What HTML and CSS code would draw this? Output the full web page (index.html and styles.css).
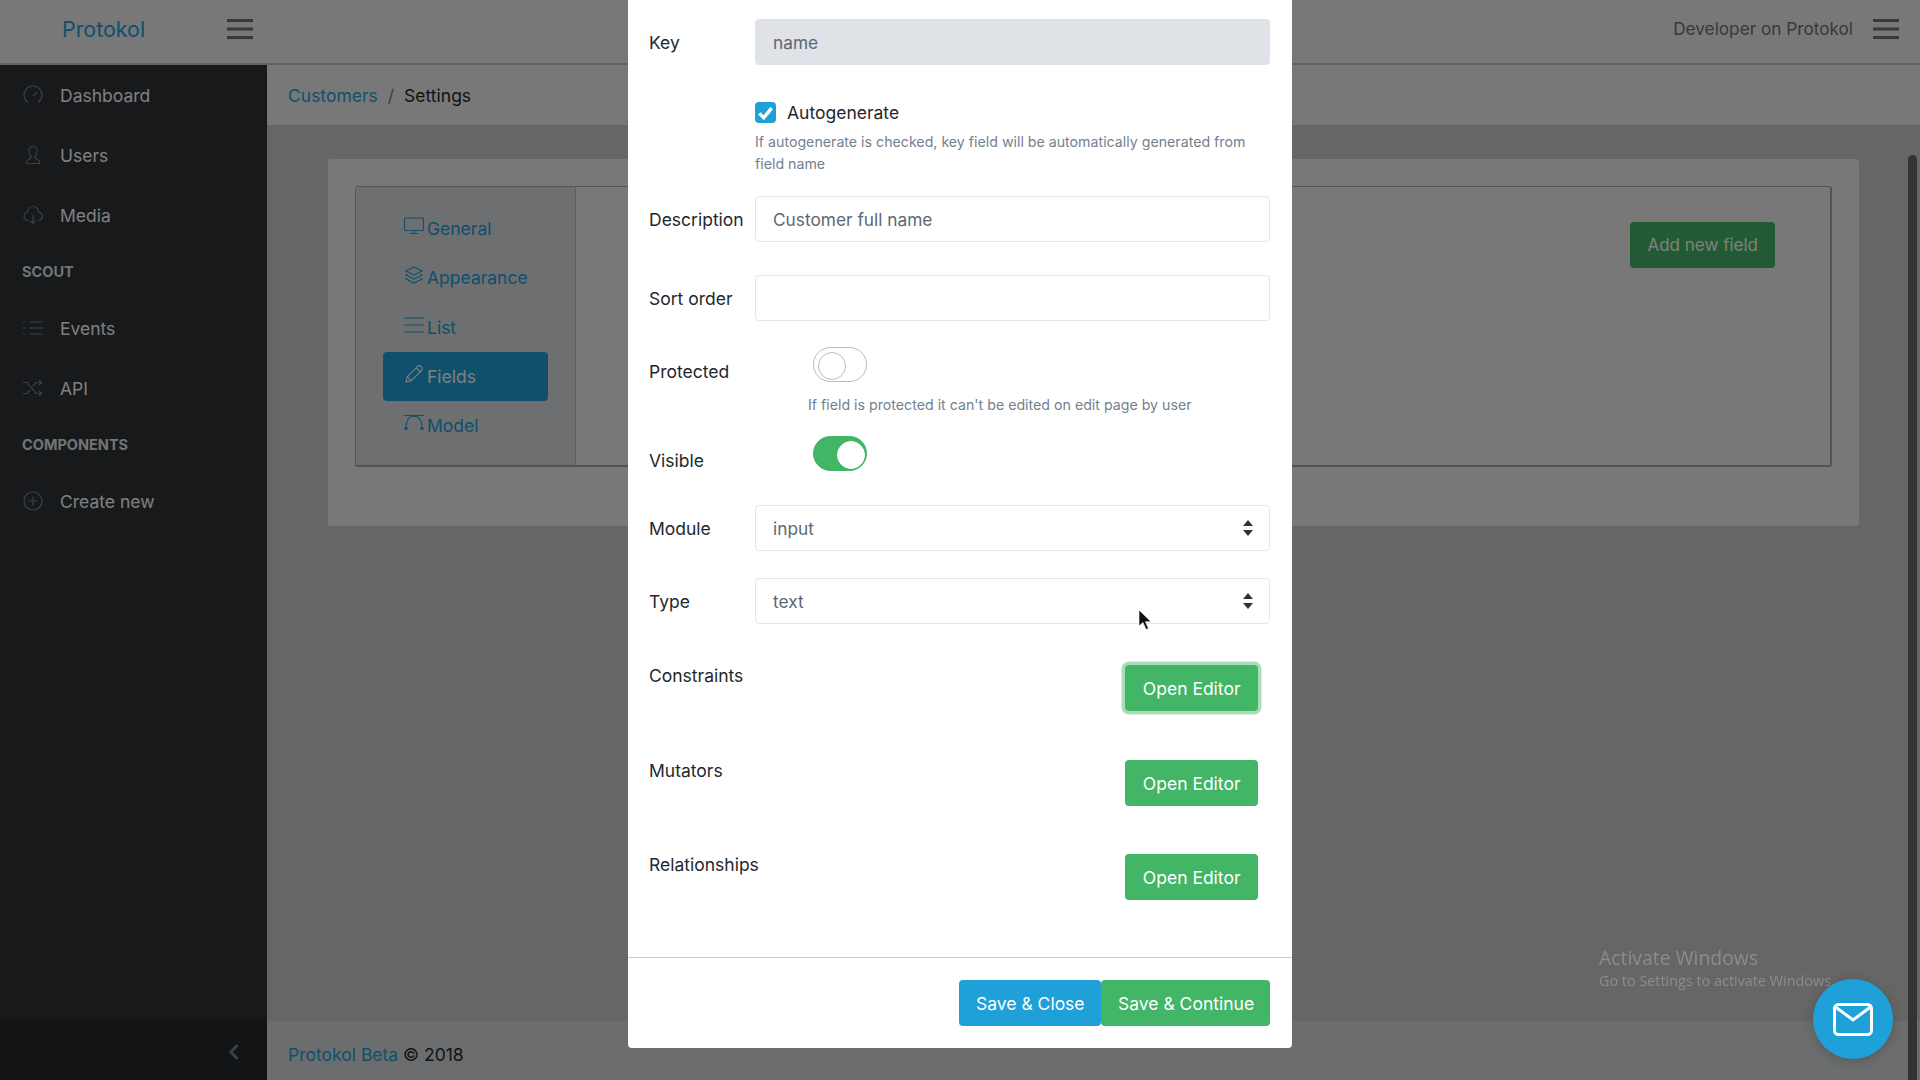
FILE: index.html
```html
<!DOCTYPE html>
<html>
<head>
    <title>Protokol - Customers Settings</title>
    <link rel="stylesheet" href="styles.css">
</head>
<body>
    <header class="topbar">
        <a class="brand">Protokol</a>
        <svg class="burger" viewBox="0 0 26 20"><path d="M0 1.5h26M0 10h26M0 18.500h26"/></svg>
        <span class="topbar-user">Developer on Protokol</span>
        <svg class="burger" viewBox="0 0 26 20"><path d="M0 1.5h26M0 10h26M0 18.500h26"/></svg>
    </header>

    <div class="layout">
        <aside class="sidebar">
            <nav class="side-nav">
                <a class="side-link">
                    <svg class="side-icon" viewBox="0 0 20 20"><path d="M5 17.500A9 9 0 1 1 15 17.500M10 10.500l4-3"/></svg>
                    Dashboard
                </a>
                <a class="side-link">
                    <svg class="side-icon" viewBox="0 0 20 20"><path d="M3.500 18.500h13v-2.500l-4.500-3v-2c1.500-1 2-2.500 2-4.500 0-3-1.500-5-4-5s-4 2-4 5c0 2 .5 3.500 2 4.500v2l-4.500 3z"/></svg>
                    Users
                </a>
                <a class="side-link">
                    <svg class="side-icon" viewBox="0 0 20 20"><path d="M5.500 15.500H5a4.300 4.300 0 0 1-.5-8.500 5.500 5.500 0 0 1 11 0 4.300 4.300 0 0 1 0 8.500M10 9.500v9M7.500 16l2.500 2.500 2.500-2.500"/></svg>
                    Media
                </a>
                <div class="side-title">Scout</div>
                <a class="side-link">
                    <svg class="side-icon" viewBox="0 0 20 20"><path d="M6.500 4H20M6.500 10H20M6.500 16H20M0 4h2M0 10h2M0 16h2"/></svg>
                    Events
                </a>
                <a class="side-link">
                    <svg class="side-icon" viewBox="0 0 20 20"><path d="M0 4.500h4l9 11h5M0 15.500h4l3-3.500M10 8l3-3.500h5M16 2l2.500 2.500L16 7M16 13l2.500 2.500L16 18"/></svg>
                    API
                </a>
                <div class="side-title">Components</div>
                <a class="side-link">
                    <svg class="side-icon" viewBox="0 0 20 20"><circle cx="10" cy="10" r="9"/><path d="M10 5.500v9M5.500 10h9"/></svg>
                    Create new
                </a>
            </nav>
            <div class="side-foot">
                <svg class="side-chevron" viewBox="0 0 12 18"><path d="M9.500 2L3 9l6.500 7"/></svg>
            </div>
        </aside>

        <main class="main">
            <div class="crumbs">
                <a class="link">Customers</a>
                <span class="crumb-sep">/</span>
                <span>Settings</span>
            </div>
            <div class="content">
                <section class="card">
                    <div class="tab-box">
                        <div class="tab-list">
                            <a class="tab">
                                <svg class="tab-icon" viewBox="0 0 20 18"><path d="M1.500 1h17a1 1 0 0 1 1 1v10.500a1 1 0 0 1-1 1h-17a1 1 0 0 1-1-1V2a1 1 0 0 1 1-1zM10 13.500v3M6 16.500h8"/></svg>
                                General
                            </a>
                            <a class="tab">
                                <svg class="tab-icon" viewBox="0 0 20 20"><path d="M10 1l9 4.500-9 4.500-9-4.500zM2.500 9L1 10l9 4.500 9-4.500-1.500-1M2.500 13.500L1 14.500 10 19l9-4.500-1.500-1"/></svg>
                                Appearance
                            </a>
                            <a class="tab">
                                <svg class="tab-icon" viewBox="0 0 20 18"><path d="M0 2h20M0 9h20M0 16h20"/></svg>
                                List
                            </a>
                            <a class="tab tab-active">
                                <svg class="tab-icon" viewBox="0 0 20 20"><path d="M1 19l1.500-6L14 1.500c1-1 2.500-1 3.500 0l1 1c1 1 1 2.500 0 3.500L7 17.500zM2.500 13L7 17.500M12.500 3l4.500 4.500"/></svg>
                                Fields
                            </a>
                            <a class="tab">
                                <svg class="tab-icon" viewBox="0 0 20 18"><path d="M2 12.500C2.500 7 4.500 3.500 7.500 2.500h5c3 1 5 4.500 5.500 10M0 1.500h20"/><circle class="tab-node" cx="2" cy="14.500" r="1.700"/><circle class="tab-node" cx="18" cy="14.500" r="1.700"/></svg>
                                Model
                            </a>
                        </div>
                        <div class="tab-pane">
                            <button class="btn btn-green btn-add">Add new field</button>
                        </div>
                    </div>
                </section>
            </div>
            <footer class="page-foot">
                <a class="link">Protokol Beta</a>&nbsp;© 2018
            </footer>
        </main>
    </div>

    <div class="backdrop"></div>

    <div class="watermark">
        <div class="watermark-big">Activate Windows</div>
        <div>Go to Settings to activate Windows.</div>
    </div>

    <div class="scrollbar"></div>

    <div class="modal-wrap">
        <div class="modal">
            <div class="modal-body">
                <div class="row row-key">
                    <label class="row-label">Key</label>
                    <div class="input input-disabled">name</div>
                </div>
                <div class="check-block">
                    <div class="check-line">
                        <span class="check-box">
                            <svg viewBox="0 0 12 12"><path d="M2.500 6.500l2.500 2.500 4.500-5.500"/></svg>
                        </span>
                        Autogenerate
                    </div>
                    <p class="help">If autogenerate is checked, key field will be automatically generated from field name</p>
                </div>
                <div class="row row-desc">
                    <label class="row-label">Description</label>
                    <div class="input">Customer full name</div>
                </div>
                <div class="row row-sort">
                    <label class="row-label">Sort order</label>
                    <div class="input"></div>
                </div>
                <div class="row row-toggle row-protected">
                    <label class="row-label">Protected</label>
                    <div class="toggle-col">
                        <span class="toggle"></span>
                        <p class="help help-toggle">If field is protected it can't be edited on edit page by user</p>
                    </div>
                </div>
                <div class="row row-toggle row-visible">
                    <label class="row-label">Visible</label>
                    <div class="toggle-col">
                        <span class="toggle toggle-on"></span>
                    </div>
                </div>
                <div class="row row-module">
                    <label class="row-label">Module</label>
                    <div class="input input-select">
                        input
                        <svg class="select-arrows" viewBox="0 0 10 16"><path d="M5 0l5 6H0zM5 16L0 10h10z"/></svg>
                    </div>
                </div>
                <div class="row row-type">
                    <label class="row-label">Type</label>
                    <div class="input input-select">
                        text
                        <svg class="select-arrows" viewBox="0 0 10 16"><path d="M5 0l5 6H0zM5 16L0 10h10z"/></svg>
                    </div>
                </div>
                <div class="row row-editor row-constraints">
                    <label class="row-label">Constraints</label>
                    <button class="btn btn-green btn-focus">Open Editor</button>
                </div>
                <div class="row row-editor">
                    <label class="row-label">Mutators</label>
                    <button class="btn btn-green">Open Editor</button>
                </div>
                <div class="row row-editor row-relations">
                    <label class="row-label">Relationships</label>
                    <button class="btn btn-green">Open Editor</button>
                </div>
            </div>
            <div class="modal-foot">
                <button class="btn btn-blue">Save &amp; Close</button>
                <button class="btn btn-green">Save &amp; Continue</button>
            </div>
        </div>
    </div>

    <a class="mail-fab">
        <svg viewBox="0 0 40 33"><rect x="1.500" y="1.500" width="37" height="30" rx="4"/><path d="M2.500 4L20 17 37.500 4"/></svg>
    </a>

    <svg class="cursor" viewBox="0 0 14 22"><path d="M1 1v16l4-3.500 3 7 2.500-1-3-6.800H13z"/></svg>
</body>
</html>
```

FILE: styles.css
```css
* {
    box-sizing: border-box;
}
html, body {
    height: 100%;
}
body {
    margin: 0;
    overflow: hidden;
    font-family: Inter, "Liberation Sans", sans-serif;
    font-size: 17.5px;
    color: #23282c;
    background-color: #cccccc;
}
.link {
    color: #20a0d8;
}

/* top bar */
.topbar {
    display: flex;
    align-items: center;
    height: 65px;
    padding: 0 21px 6px 62px;
    background-color: #f0f0f0;
    border-bottom: 2px solid #c4c4c4;
}
.brand {
    width: 165px;
    font-size: 21.4px;
    color: #20a0d8;
}
.burger {
    width: 26px;
    height: 20px;
    fill: none;
    stroke: #6b7580;
    stroke-width: 3;
}
.topbar-user {
    margin-left: auto;
    margin-right: 20px;
    font-size: 17.2px;
    color: #6b7580;
}

/* sidebar */
.layout {
    display: flex;
    height: 1015px;
}
.sidebar {
    display: flex;
    flex-direction: column;
    justify-content: space-between;
    width: 267px;
    background-color: #2f3236;
    color: #fff;
}
.side-link {
    display: flex;
    align-items: center;
    gap: 17px;
    height: 60px;
    padding-left: 23px;
}
.side-icon {
    width: 20px;
    height: 20px;
    fill: none;
    stroke: #73818f;
    stroke-width: 1.2;
}
.side-title {
    display: flex;
    align-items: center;
    height: 53px;
    padding-left: 22px;
    font-size: 14.5px;
    font-weight: 700;
    text-transform: uppercase;
    color: #e4e7ea;
}
.side-foot {
    display: flex;
    justify-content: flex-end;
    align-items: center;
    height: 60px;
    padding: 4px 27px 0 0;
    background-color: #26282c;
}
.side-chevron {
    width: 12px;
    height: 18px;
    fill: none;
    stroke: #73818f;
    stroke-width: 3;
}

/* main column */
.main {
    flex: 1;
    display: flex;
    flex-direction: column;
}
.crumbs {
    display: flex;
    align-items: center;
    height: 61px;
    padding-left: 21px;
    background-color: #f0f0f0;
    border-bottom: 1px solid #c4c8cc;
}
.crumb-sep {
    margin: 0 10px;
    color: #73818f;
}
.content {
    flex: 1;
    padding: 32px 60px 0 60px;
}
.card {
    height: 369px;
    padding: 27px;
    background-color: #f0f0f0;
    border: 1px solid #c8ced3;
    border-radius: 4px;
}
.tab-box {
    display: flex;
    height: 281px;
    border: 1px solid #a4a7a9;
    border-width: 1px 2px 2px 1px;
    border-radius: 3px;
}
.tab-list {
    width: 220px;
    padding: 17px 27px 0;
    background-color: #dadee2;
    border-right: 1px solid #bcc0c4;
}
.tab {
    display: flex;
    align-items: center;
    gap: 3px;
    height: 49.300px;
    padding-left: 21px;
    color: #20a0d8;
}
.tab-active {
    background-color: #20a0d8;
    border-radius: 4px;
    color: #fff;
}
.tab-icon {
    width: 20px;
    height: 18px;
    margin-top: -5px;
    fill: none;
    stroke: currentColor;
    stroke-width: 1.200;
}
.tab-node {
    fill: currentColor;
    stroke: none;
}
.tab-pane {
    flex: 1;
    display: flex;
    justify-content: flex-end;
    align-items: flex-start;
    padding: 35px 55px 0 0;
}
.page-foot {
    display: flex;
    align-items: center;
    height: 60px;
    padding: 8px 0 0 21px;
    background-color: #d8dadd;
    border-top: 1px solid #c4c8cc;
}

/* buttons */
.btn {
    height: 46px;
    padding: 0 17px;
    font: inherit;
    white-space: nowrap;
    color: #fff;
    border: 0;
    border-radius: 4px;
}
.btn-add {
    font-size: 17px;
}
.btn-green {
    background-color: #42b566;
}
.btn-blue {
    background-color: #20a0d8;
}
.btn-focus {
    box-shadow: 0 0 0 3.500px rgba(66, 181, 102, 0.45);
}

/* overlay layers */
.backdrop {
    position: fixed;
    inset: 0;
    background-color: rgba(0, 0, 0, 0.5);
}
.watermark {
    position: fixed;
    left: 1599px;
    top: 945px;
    font-family: "Open Sans", sans-serif;
    font-size: 14.4px;
    color: #8c8c8c;
}
.watermark-big {
    font-size: 19.4px;
    line-height: 26px;
}
.scrollbar {
    position: fixed;
    top: 155px;
    right: 3px;
    bottom: -10px;
    width: 9px;
    background-color: #333;
    border-radius: 5px;
}

/* modal */
.modal-wrap {
    position: fixed;
    inset: 0;
    display: flex;
    justify-content: center;
    align-items: flex-end;
    padding-bottom: 32px;
}
.modal {
    width: 664px;
    background-color: #fff;
    border-radius: 0 0 4px 4px;
}
.modal-body {
    padding: 30px 22px 57px 21px;
}
.row {
    display: flex;
    align-items: center;
}
.row-label {
    width: 106px;
    flex-shrink: 0;
}
.input {
    display: flex;
    align-items: center;
    flex: 1;
    height: 46px;
    padding: 0 17px;
    font-size: 17.3px;
    color: #5c6873;
    background-color: #fff;
    border: 1px solid #e4e7ea;
    border-radius: 4px;
}
.input-disabled {
    background-color: #dfe2e6;
    border-color: #dfe2e6;
}
.input-select {
    justify-content: space-between;
    padding-right: 16px;
}
.select-arrows {
    width: 10px;
    height: 16px;
    fill: #2d3238;
}
.check-block {
    margin: 37px 0 21px 106px;
}
.check-line {
    display: flex;
    align-items: center;
    gap: 11px;
    height: 21px;
}
.check-box {
    display: flex;
    width: 21px;
    height: 21px;
    background-color: #20a0d8;
    border-radius: 4px;
}
.check-box svg {
    fill: none;
    stroke: #fff;
    stroke-width: 2;
}
.help {
    margin: 8px 0 0;
    font-size: 14.2px;
    line-height: 22px;
    color: #73818f;
}
.row-sort {
    margin-top: 33px;
}
.row-toggle {
    align-items: flex-start;
}
.row-toggle .row-label {
    padding-top: 14px;
}
.row-protected {
    margin-top: 26px;
}
.row-visible {
    margin-top: 20px;
}
.toggle-col {
    flex: 1;
    padding-left: 58px;
}
.toggle {
    display: block;
    position: relative;
    width: 54px;
    height: 35px;
    background-color: #fff;
    border: 1px solid #b8bcc0;
    border-radius: 18px;
}
.toggle::after {
    content: "";
    position: absolute;
    top: 3.500px;
    left: 3.500px;
    width: 26px;
    height: 26px;
    background-color: #fff;
    border: 1px solid #b8bcc0;
    border-radius: 50%;
}
.toggle-on {
    background-color: #42b566;
    border-color: #42b566;
}
.toggle-on::after {
    left: 23px;
    border-color: #fff;
}
.help-toggle {
    margin: 12px 0 0 -5px;
}
.row-module {
    margin-top: 34px;
}
.row-type {
    margin-top: 27px;
}
.row-editor {
    align-items: flex-start;
    justify-content: space-between;
    margin-top: 49px;
    padding-right: 12px;
}
.row-editor .btn {
    padding: 0 17.500px;
}
.row-editor .row-label {
    line-height: 22px;
    width: auto;
}
.row-constraints {
    margin-top: 41px;
}
.row-relations {
    margin-top: 48px;
}
.modal-foot {
    display: flex;
    justify-content: flex-end;
    padding: 22px;
    border-top: 1px solid #c8ced3;
}
.modal-foot .btn-green {
    width: 169px;
}
.modal-foot .btn-blue {
    width: 142px;
}

/* floating bits */
.mail-fab {
    position: fixed;
    left: 1813px;
    top: 979px;
    display: flex;
    align-items: center;
    justify-content: center;
    width: 80px;
    height: 80px;
    background-color: #20a0d8;
    border-radius: 50%;
    box-shadow: 0 2px 12px rgba(0, 0, 0, 0.2);
}
.mail-fab svg {
    width: 40px;
    height: 33px;
    fill: none;
    stroke: #fff;
    stroke-width: 3;
}
.cursor {
    position: fixed;
    left: 1138px;
    top: 609px;
    width: 14px;
    height: 22px;
    fill: #111;
    stroke: #fff;
    stroke-width: 0.6;
}
```
